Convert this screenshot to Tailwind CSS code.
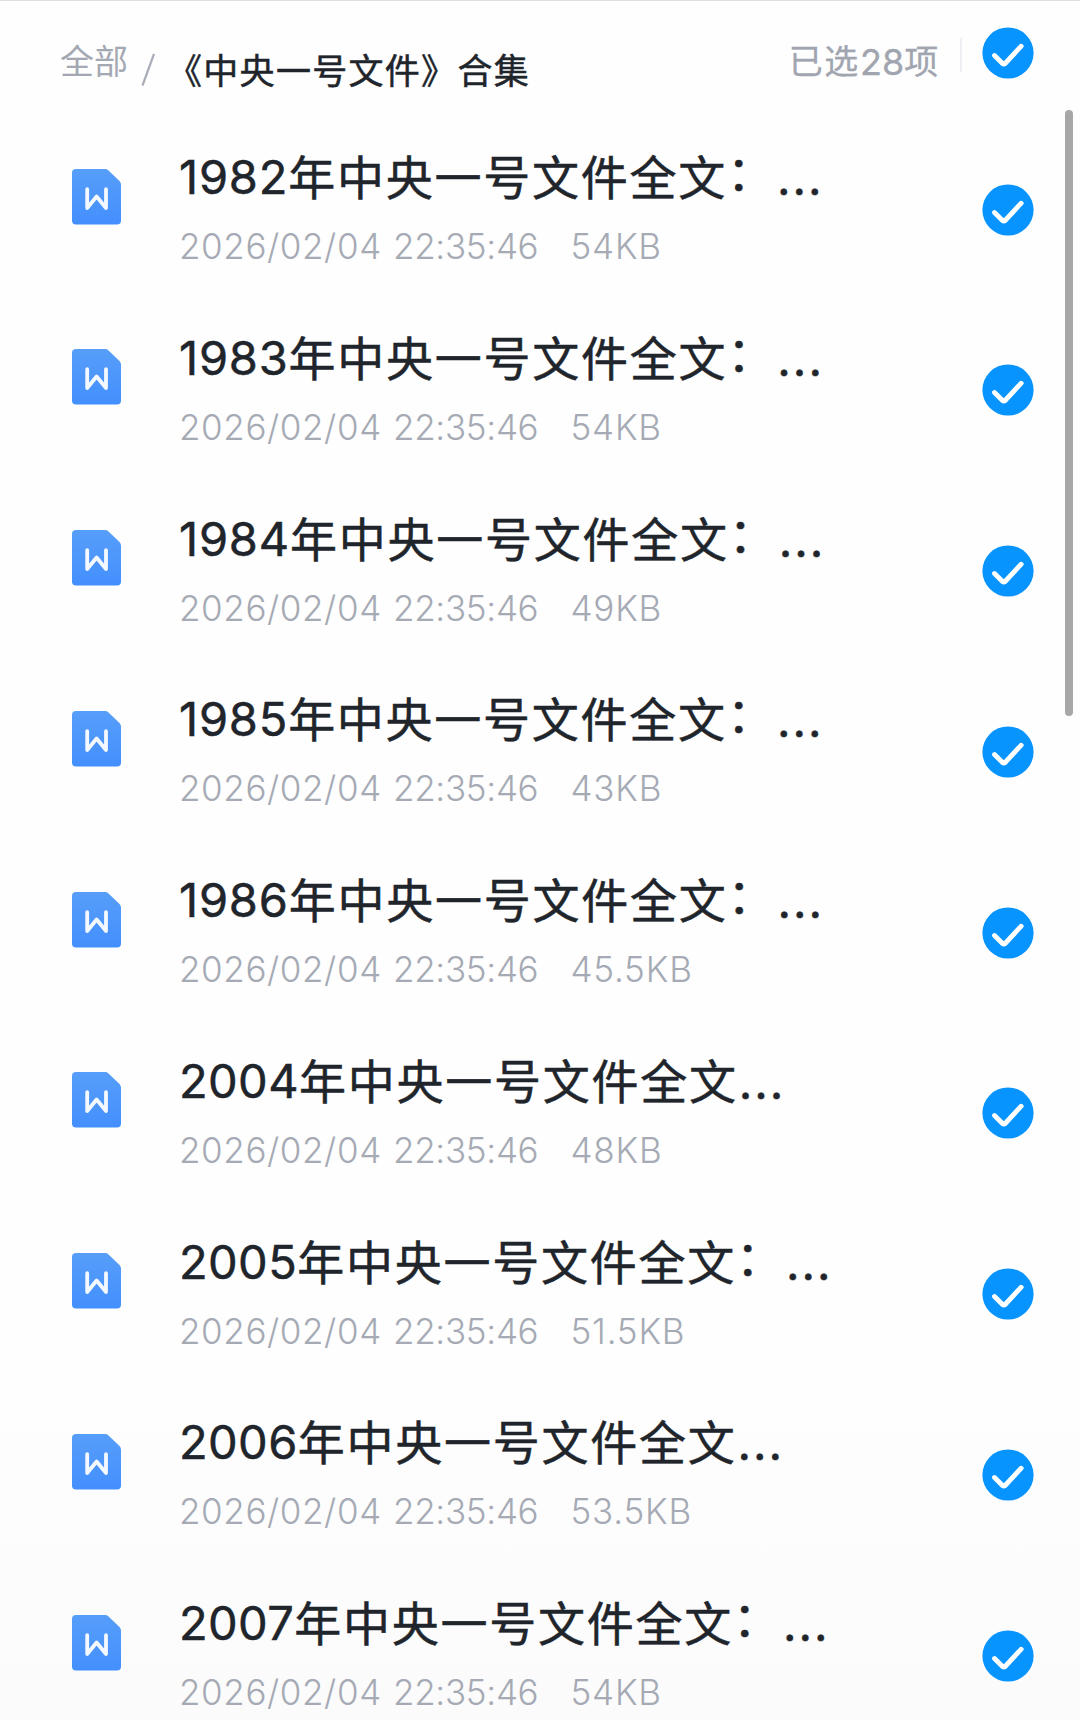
<!DOCTYPE html>
<html lang="zh-CN">
<head>
<meta charset="utf-8">
<title>《中央一号文件》合集</title>
<script src="https://cdn.jsdelivr.net/npm/@tailwindcss/browser@4"></script>
</head>
<body class="bg-[#fefefe]">
<svg class="absolute h-0 w-0">
  <defs>
    <linearGradient id="blue" x1="0" y1="0" x2="0" y2="1"><stop offset="0" stop-color="#579ef9"/><stop offset="1" stop-color="#438ffe"/></linearGradient>
    <symbol id="doc" viewBox="0 0 50 56">
      <path d="M4 0H33Q35 0 36.500 1.400L47.500 12Q49 13.500 49 15.500V51.500Q49 55.500 45 55.500H4Q0 55.500 0 51.500V4Q0 0 4 0Z" fill="url(#blue)"/>
      <path d="M15.200 20.200V39L24.600 27.500L34 39V20.200" fill="none" stroke="#f4f9ff" stroke-width="3.800" stroke-linecap="round" stroke-linejoin="round"/>
    </symbol>
    <symbol id="check" viewBox="0 0 52 52">
      <circle cx="26" cy="26" r="25.600" fill="#0794ff"/>
      <path d="M12.500 28.500L20.500 36.500Q21.800 37.500 23.100 36.500L39.200 19.200" fill="none" stroke="#fff" stroke-width="4.800" stroke-linecap="round" stroke-linejoin="round"/>
    </symbol>
  </defs>
</svg>
<div class="relative h-[1720px] w-[1080px] overflow-hidden border-t border-[#dedede] bg-linear-to-b from-[#fefefe] from-80% to-[#fbfbfc] font-['Inter','Noto_Sans_CJK_SC',sans-serif]">
  <header class="flex h-[119px] items-start pr-[46px] pl-[60px] whitespace-nowrap">
    <span class="mt-[38px] w-[81px] text-[34px] leading-[46px] text-[#a3a8b3]">全部</span>
    <svg class="mt-[51px] h-9 w-[14px] shrink-0" viewBox="0 0 14 36"><path d="M1.500 33.500L13 2" stroke="#a9adb7" stroke-width="2.200"/></svg>
    <h1 class="mt-[47px] ml-[12px] grow text-[35px] leading-[46px] tracking-[1.3px] text-[#20242b] [-webkit-text-stroke:0.5px]">《中央一号文件》合集</h1>
    <span class="mt-[38px] flex text-[34px] leading-[46px] text-[#a0a5b0] [-webkit-text-stroke:0.3px]"><span class="tracking-[1.7px]">已选</span><span class="text-[36px]">28</span><span class="tracking-[1.7px]">项</span></span>
    <span class="mt-[37px] ml-[20px] h-[34px] w-[2px] bg-[#eeeff2]"></span>
    <svg class="mt-[26px] ml-5 size-[52px] shrink-0"><use href="#check"/></svg>
  </header>
  <main id="files"></main>
  <div class="absolute top-[109px] left-[1065px] h-[606px] w-[7.500px] rounded-full bg-[#a7a7a7]"></div>
</div>
<template id="row">
  <article class="flex h-[180.75px] items-start pr-[46px] pl-[72px]">
    <svg class="mt-[48.500px] h-[56px] w-[50px] shrink-0"><use href="#doc"/></svg>
    <div class="ml-[57px] grow whitespace-nowrap">
      <h2 class="mt-[25px] flex h-[64px] text-[47px] leading-[64px] text-[#20242b] [-webkit-text-stroke:0.5px]"><span class="year"></span><span class="name -mt-[2px] font-['Noto_Sans_CJK_SC',sans-serif] tracking-[1.75px]"></span><span class="colon -mt-[7px] font-['Noto_Sans_CJK_SC',sans-serif] tracking-[2px]"></span><span class="mt-px ml-px tracking-[2px]">...</span></h2>
      <p class="mt-[19px] flex h-[36px] text-[35px] leading-[36px] font-[350] text-[#a5aab4]"><span class="w-[214px] tracking-[0.6px]">2026/02/04</span><span class="w-[177.500px] tracking-[-0.3px]">22:35:46</span><span class="size tracking-[0.8px]"></span></p>
    </div>
    <svg class="mt-[63.500px] size-[52px] shrink-0"><use href="#check"/></svg>
  </article>
</template>
<script>
  const files = [
    ['1982', 1, '54KB'], ['1983', 1, '54KB'], ['1984', 1, '49KB'],
    ['1985', 1, '43KB'], ['1986', 1, '45.5KB'], ['2004', 0, '48KB'],
    ['2005', 1, '51.5KB'], ['2006', 0, '53.5KB'], ['2007', 1, '54KB'],
  ];
  for (const [year, colon, size] of files) {
    const row = document.getElementById('row').content.cloneNode(true);
    const label = row.querySelector('.year');
    label.textContent = year;
    label.classList.add(year < '2000' ? 'tracking-[0.8px]' : 'tracking-[0.4px]');
    row.querySelector('.name').textContent = '年中央一号文件全文';
    row.querySelector('.colon').textContent = colon ? '\uff1a' : '';
    row.querySelector('.size').textContent = size;
    document.getElementById('files').append(row);
  }
</script>
</body>
</html>
